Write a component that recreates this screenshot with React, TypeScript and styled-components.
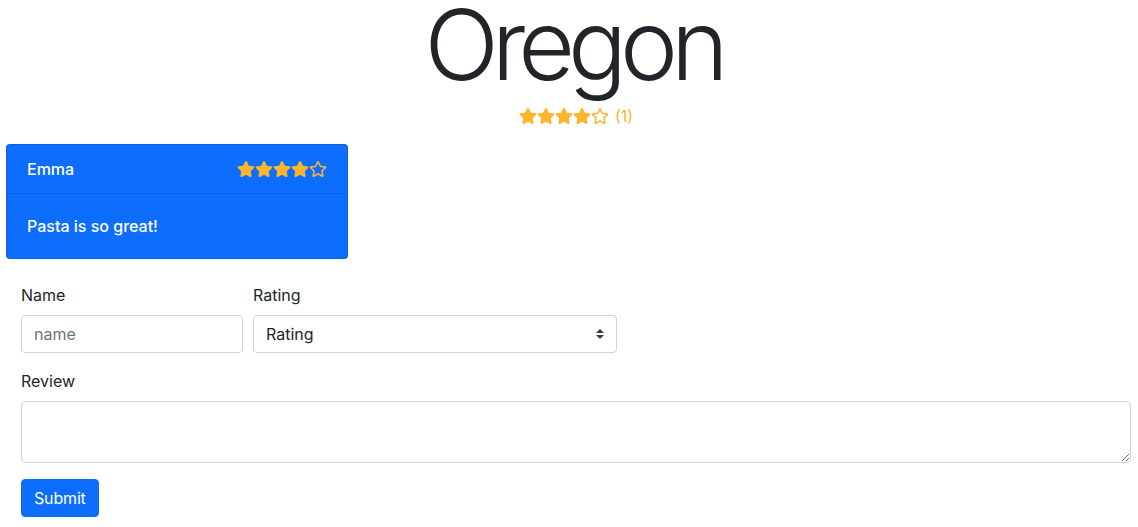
import React from "react";
import styled, { createGlobalStyle } from "styled-components";
import { FaStar, FaRegStar } from "react-icons/fa";

const Global = createGlobalStyle`
  html, body { margin: 0; padding: 0; background: #fff; }
  body {
    font-family: Inter, "Noto Sans", "Liberation Sans", sans-serif;
    font-size: 16px;
    line-height: 1.5;
    color: #212529;
  }
  * { box-sizing: border-box; }
`;

const Page = styled.div`
  display: flex;
  flex-direction: column;
  padding-bottom: 10px;
`;

const Header = styled.header`
  display: flex;
  flex-direction: column;
  align-items: center;
  padding-left: 14px;
`;

const Title = styled.h1`
  margin: -9px 6px 0 0;
  font-size: 98px;
  font-weight: 350;
  line-height: 1.1;
  letter-spacing: -0.072em;
  color: #212529;
`;

const Summary = styled.div`
  display: flex;
  align-items: center;
  gap: 6px;
  margin-top: 5px;
  height: 24px;
  color: #fbb62c;
`;

const StarRow = styled.span`
  display: inline-flex;
  align-items: center;
  color: #fbb62c;
  font-size: 16px;
  svg { display: block; }
`;

const Count = styled.span`
  font-size: 16px;
  color: #f7b630;
`;

const Card = styled.div`
  margin: 16px 0 0 6px;
  width: 342px;
  background: #0d6efd;
  color: #fff;
  border: 1px solid rgba(0, 0, 0, 0.125);
  border-radius: 4px;
  display: flex;
  flex-direction: column;
`;

const CardHead = styled.div`
  display: flex;
  align-items: center;
  justify-content: space-between;
  padding: 12px 20px;
  border-bottom: 1px solid rgba(0, 0, 0, 0.125);
  font-weight: 500;
`;

const CardBody = styled.div`
  padding: 20px;
  font-weight: 500;
`;

const Form = styled.form`
  display: flex;
  flex-direction: column;
  gap: 16px;
  margin: 24px 7px 0 21px;
`;

const Row = styled.div`
  display: flex;
  gap: 10px;
`;

const Field = styled.div<{ $w?: number }>`
  display: flex;
  flex-direction: column;
  width: ${(p) => (p.$w ? `${p.$w}px` : "100%")};
`;

const Label = styled.label`
  margin-bottom: 8px;
  font-size: 16px;
  line-height: 24px;
`;

const controlCss = `
  width: 100%;
  height: 38px;
  padding: 6px 12px;
  font-family: inherit;
  font-size: 16px;
  line-height: 24px;
  color: #495057;
  background: #fff;
  border: 1px solid #ced4da;
  border-radius: 4px;
  outline: none;
`;

const Input = styled.input`
  ${controlCss}
  &::placeholder { color: #6c757d; }
`;

const SelectWrap = styled.div`
  position: relative;
`;

const Select = styled.select`
  ${controlCss}
  appearance: none;
  -webkit-appearance: none;
  color: #212529;
  padding-right: 28px;
`;

const SelectArrow = styled.svg`
  position: absolute;
  right: 13px;
  top: 14px;
  width: 8px;
  height: 10px;
  pointer-events: none;
`;

const TextArea = styled.textarea`
  ${controlCss}
  height: 62px;
  resize: vertical;
  display: block;
`;

const Button = styled.button`
  align-self: flex-start;
  height: 38px;
  padding: 6px 12px;
  font-family: inherit;
  font-size: 16px;
  line-height: 24px;
  font-weight: 400;
  letter-spacing: -0.01em;
  color: #fff;
  background: #0d6efd;
  border: 1px solid #0d6efd;
  border-radius: 4px;
  cursor: pointer;
`;

const Stars: React.FC<{ value: number }> = ({ value }) => (
  <StarRow>
    {[1, 2, 3, 4, 5].map((i) =>
      i <= value ? <FaStar key={i} size={16} style={{ width: 18 }} /> : <FaRegStar key={i} size={16} style={{ width: 18 }} />
    )}
  </StarRow>
);

export default function App() {
  return (
    <Page>
      <Global />
      <Header>
        <Title>Oregon</Title>
        <Summary>
          <Stars value={4} />
          <Count>(1)</Count>
        </Summary>
      </Header>
      <Card>
        <CardHead>
          <span>Emma</span>
          <Stars value={4} />
        </CardHead>
        <CardBody>Pasta is so great!</CardBody>
      </Card>
      <Form onSubmit={(e) => e.preventDefault()}>
        <Row>
          <Field $w={222}>
            <Label htmlFor="name">Name</Label>
            <Input id="name" placeholder="name" />
          </Field>
          <Field $w={364}>
            <Label htmlFor="rating">Rating</Label>
            <SelectWrap>
              <Select id="rating" defaultValue="">
                <option value="">Rating</option>
                <option value="1">1</option>
                <option value="2">2</option>
                <option value="3">3</option>
                <option value="4">4</option>
                <option value="5">5</option>
              </Select>
              <SelectArrow viewBox="0 0 4 5">
                <path fill="#343a40" d="M2 0L0 2h4zm0 5L0 3h4z" />
              </SelectArrow>
            </SelectWrap>
          </Field>
        </Row>
        <Field>
          <Label htmlFor="review">Review</Label>
          <TextArea id="review" />
        </Field>
        <Button type="submit">Submit</Button>
      </Form>
    </Page>
  );
}
